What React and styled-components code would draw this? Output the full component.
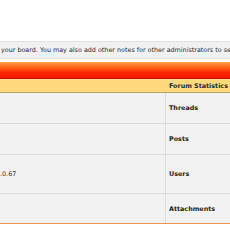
import React from 'react';
import styled, { createGlobalStyle } from 'styled-components';

const GlobalStyle = createGlobalStyle`
    html, body {
        margin: 0;
        padding: 0;
        background: #ffffff;
        overflow: hidden;
    }
    body {
        font-family: 'DejaVu Sans', Verdana, sans-serif;
        font-size: 6.4px;
        color: #222;
    }
`;

const Page = styled.div`
    width: 230px;
    height: 230px;
    padding-top: 41px;
    box-sizing: border-box;
    overflow: hidden;
`;

const Notice = styled.div`
    height: 16px;
    display: flex;
    align-items: center;
    padding-left: 1px;
    background: #f1f1f1;
    border-top: 1px solid #e2e2e2;
    border-bottom: 1px solid #e2e2e2;
    white-space: nowrap;
    color: #2a2a2a;
`;

const Banner = styled.div`
    margin-top: 3px;
    height: 16px;
    background: linear-gradient(#ffa24a 0%, #ff6a1a 30%, #ff2a00 65%, #f01800 100%);
    border-bottom: 1px solid #c01000;
`;

const HeaderRow = styled.div`
    display: grid;
    grid-template-columns: 166px 1fr;
    height: 13px;
    background: #ffd97c;
    border-bottom: 1px solid #b8a06a;
    font-weight: bold;
    white-space: nowrap;
`;

const HeaderCell = styled.div`
    display: flex;
    align-items: center;
    padding-left: 3px;
    color: #2a2a2a;
`;

const Row = styled.div`
    display: grid;
    grid-template-columns: 166px 1fr;
    height: ${(p) => p.h}px;
    background: #f2f2f2;
    border-bottom: 1px solid ${(p) => (p.last ? '#e8955a' : '#dcdcdc')};
    white-space: nowrap;
`;

const ValueCell = styled.div`
    display: flex;
    align-items: center;
    border-right: 1px solid #dcdcdc;
    color: #333;
`;

const LabelCell = styled.div`
    display: flex;
    align-items: center;
    padding-left: 3px;
    font-weight: bold;
    color: #1e1e1e;
`;

const rows = [
    { label: 'Threads', value: '', h: 30 },
    { label: 'Posts', value: '', h: 30 },
    { label: 'Users', value: '.0.67', h: 38 },
    { label: 'Attachments', value: '', h: 29 },
];

const App = () => (
    <Page>
        <GlobalStyle />
        <Notice>your board. You may also add other notes for other administrators to see.</Notice>
        <Banner />
        <HeaderRow>
            <HeaderCell />
            <HeaderCell>Forum Statistics</HeaderCell>
        </HeaderRow>
        {rows.map((r, i) => (
            <Row key={r.label} h={r.h} last={i === rows.length - 1}>
                <ValueCell>{r.value}</ValueCell>
                <LabelCell>{r.label}</LabelCell>
            </Row>
        ))}
    </Page>
);

export default App;
